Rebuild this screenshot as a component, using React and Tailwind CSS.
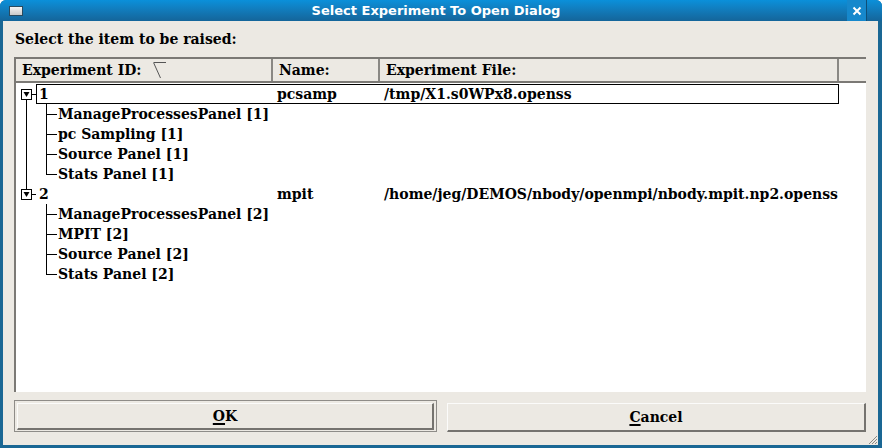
import React from "react";

const serif = "font-['DejaVu_Serif',serif] font-bold text-[14px] text-black";

function Gutter({ type }) {
  const parent = type === "p1" || type === "p2";
  const w = parent ? 20 : 42;
  return (
    <svg width={w} height="20" className="shrink-0 block" shapeRendering="crispEdges">
      {parent && (
        <g>
          {type === "p1" && <line x1="10.5" y1="15" x2="10.5" y2="20" stroke="#000" />}
          {type === "p2" && <line x1="10.5" y1="0" x2="10.5" y2="5" stroke="#000" />}
          <rect x="5.5" y="5.5" width="10" height="10" fill="#fff" stroke="#000" />
          <polygon points="7.5,8 13.5,8 10.5,13" fill="#000" shapeRendering="auto" />
          <line x1="16" y1="10.5" x2="20" y2="10.5" stroke="#000" />
        </g>
      )}
      {type === "c1" && <line x1="10.5" y1="0" x2="10.5" y2="20" stroke="#000" />}
      {(type === "c1" || type === "c2") && (
        <line x1="30.5" y1="0" x2="30.5" y2="20" stroke="#000" />
      )}
      {(type === "c1l" || type === "c2l") && (
        <line x1="30.5" y1="0" x2="30.5" y2="11" stroke="#000" />
      )}
      {type === "c1l" && <line x1="10.5" y1="0" x2="10.5" y2="20" stroke="#000" />}
      {!parent && <line x1="30" y1="10.5" x2="41" y2="10.5" stroke="#000" />}
    </svg>
  );
}

function ParentRow({ type, id, name, file, selected }) {
  return (
    <div className="flex h-[20px] mr-[27px]">
      <Gutter type={type} />
      <div
        className={
          selected
            ? "flex flex-1 items-center border border-black"
            : "flex flex-1 items-center border border-transparent"
        }
      >
        <div className={`${serif} w-[236px] pl-[2px] leading-[18px] whitespace-nowrap`}>{id}</div>
        <div className={`${serif} w-[107px] pl-[4px] leading-[18px] whitespace-nowrap`}>{name}</div>
        <div className={`${serif} flex-1 pl-[4px] leading-[18px] whitespace-nowrap`}>{file}</div>
      </div>
    </div>
  );
}

function ChildRow({ type, label }) {
  return (
    <div className="flex h-[20px] items-center">
      <Gutter type={type} />
      <div className={`${serif} leading-[19px] whitespace-nowrap`}>{label}</div>
    </div>
  );
}

export default function App() {
  return (
    <div className="w-[882px] h-[448px] bg-[#1a6794] flex flex-col rounded-t-[6px] overflow-hidden">
      {/* Title bar */}
      <div className="h-[21px] shrink-0 flex items-center bg-gradient-to-b from-[#0a90da] to-[#14659a] relative">
        <div className="ml-[9px] w-[14px] h-[10px] border border-[#2a4a5e] bg-gradient-to-b from-[#f4f4f4] to-[#c9c9c9]" />
        <div className="flex-1 text-center font-['DejaVu_Sans',sans-serif] font-bold text-[13px] text-white leading-[21px] pl-[2px]">
          Select Experiment To Open Dialog
        </div>
        <div className="w-[20px] h-[21px] mr-[15px] bg-[#1688cc] border-r border-[#0e4f78] flex items-center justify-center">
          <svg width="10" height="10" viewBox="0 0 10 10">
            <path d="M1.5 1.5 L8.5 8.5 M8.5 1.5 L1.5 8.5" stroke="#fff" strokeWidth="2" />
          </svg>
        </div>
      </div>

      {/* Body */}
      <div className="flex-1 ml-[3px] mr-[4px] mb-[3px] bg-[#ece9e3] flex flex-col relative">
        <div className={`${serif} pl-[12px] pt-[11px] h-[27px] leading-[15px]`}>
          Select the item to be raised:
        </div>
        <div className="ml-[11px] mr-[12px] mt-[9px] h-[335px] flex flex-col border-l-2 border-[#7b7975]">
          {/* Header */}
          <div className="h-[26px] shrink-0 flex bg-[#ece9e3] border-t-2 border-b-2 border-[#7b7975]">
            <div className={`${serif} w-[257px] pl-[6px] flex items-center border-r-2 border-[#8a8884] relative`}>
              Experiment ID:
              <svg width="14" height="18" className="absolute left-[137px] top-[3px]" shapeRendering="crispEdges">
                <path d="M0.5 0.5 H13" stroke="#555" />
                <path d="M0.5 0.5 L7.5 16" stroke="#555" fill="none" shapeRendering="auto" />
              </svg>
            </div>
            <div className={`${serif} w-[107px] pl-[6px] flex items-center border-r-2 border-[#8a8884]`}>Name:</div>
            <div className={`${serif} w-[459px] pl-[6px] flex items-center border-r-2 border-[#8a8884]`}>
              Experiment File:
            </div>
            <div className="flex-1" />
          </div>
          {/* Tree body */}
          <div className="flex-1 bg-white pt-[1px]">
            <ParentRow type="p1" id="1" name="pcsamp" file="/tmp/X1.s0WPx8.openss" selected />
            <ChildRow type="c1" label="ManageProcessesPanel [1]" />
            <ChildRow type="c1" label="pc Sampling [1]" />
            <ChildRow type="c1" label="Source Panel [1]" />
            <ChildRow type="c1l" label="Stats Panel [1]" />
            <ParentRow
              type="p2"
              id="2"
              name="mpit"
              file="/home/jeg/DEMOS/nbody/openmpi/nbody.mpit.np2.openss"
            />
            <ChildRow type="c2" label="ManageProcessesPanel [2]" />
            <ChildRow type="c2" label="MPIT [2]" />
            <ChildRow type="c2" label="Source Panel [2]" />
            <ChildRow type="c2l" label="Stats Panel [2]" />
          </div>
        </div>

        {/* Buttons */}
        <div className="ml-[11px] mr-[12px] mt-[8px] h-[32px] flex gap-[10px]">
          <div className="w-[423px] border border-[#8e8c88] p-[2px] pb-[1px]">
            <div className="h-full bg-[#ece9e3] border-t border-l border-[#fbfbfa] border-r-2 border-b-2 border-r-[#75736f] border-b-[#75736f] flex items-center justify-center">
              <span className={serif}>
                <span className="underline decoration-2 underline-offset-2">O</span>K
              </span>
            </div>
          </div>
          <div className="flex-1 pt-[3px]">
            <div className="h-[29px] bg-[#ece9e3] border-t border-l border-[#fbfbfa] border-r-2 border-b-2 border-r-[#75736f] border-b-[#75736f] flex items-center justify-center">
              <span className={serif}>
                <span className="underline decoration-2 underline-offset-2">C</span>ancel
              </span>
            </div>
          </div>
        </div>
        <svg width="12" height="12" className="absolute right-0 bottom-0" viewBox="0 0 12 12">
          <path d="M11 3 L3 11 M11 6 L6 11 M11 9 L9 11" stroke="#8a8884" strokeWidth="1" />
        </svg>
      </div>
    </div>
  );
}
